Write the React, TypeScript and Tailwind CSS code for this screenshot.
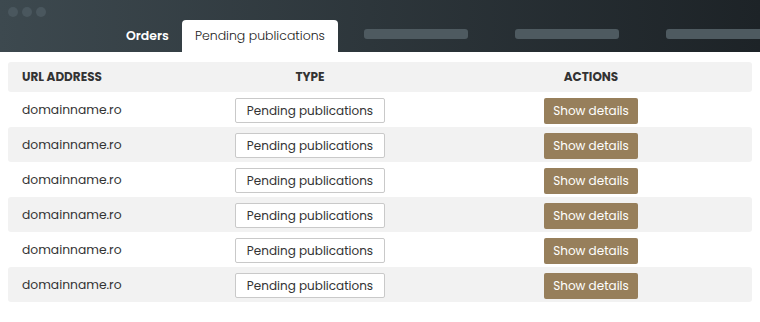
const rows = Array.from({ length: 6 }, (_, i) => i);

const App = () => {
  return (
    <div className="w-[760px] h-[322px] bg-white overflow-hidden font-['Poppins','Open_Sans',sans-serif]">
      {/* Top bar */}
      <div className="relative h-[52px] bg-gradient-to-r from-[#3d494f] to-[#1d2327]">
        <div className="absolute left-[8px] top-[7px] flex gap-[4px]">
          <span className="w-[10px] h-[10px] rounded-full bg-[#4a575e]" />
          <span className="w-[10px] h-[10px] rounded-full bg-[#4a575e]" />
          <span className="w-[10px] h-[10px] rounded-full bg-[#4a575e]" />
        </div>
        <div className="flex items-end h-full pl-[113px]">
          <div className="h-[32px] px-[13px] shrink-0 flex items-center text-[12.5px] font-semibold text-white">
            Orders
          </div>
          <div className="h-[32px] w-[156px] shrink-0 bg-white rounded-t-[4px] flex items-center justify-center text-[12.5px] font-light text-[#222]">
            Pending publications
          </div>
          <div className="flex gap-[47px] ml-[26px] self-start mt-[29px] shrink-0">
            <span className="w-[104px] h-[10px] rounded-[3px] bg-[#4e5a60]" />
            <span className="w-[104px] h-[10px] rounded-[3px] bg-[#4e5a60]" />
            <span className="w-[104px] h-[10px] rounded-[3px] bg-[#4e5a60]" />
          </div>
        </div>
      </div>

      {/* Table */}
      <div className="mx-[8px] mt-[10px]">
        <div className="grid grid-cols-[180px_244px_318px] h-[30px] items-center bg-[#f2f2f2] rounded-[3px] text-[12px] font-bold text-[#333]">
          <div className="pl-[14px]">URL ADDRESS</div>
          <div className="text-center">TYPE</div>
          <div className="text-center">ACTIONS</div>
        </div>
        {rows.map((i) => (
          <div
            key={i}
            className={`grid grid-cols-[180px_244px_318px] h-[35px] pt-[2px] items-center rounded-[3px] text-[12px] text-[#333] ${
              i % 2 === 1 ? "bg-[#f2f2f2]" : "bg-white"
            }`}
          >
            <div className="pl-[14px] text-[12.3px]">domainname.ro</div>
            <div className="flex justify-center">
              <div className="w-[150px] h-[25px] border border-[#c9c9c9] rounded-[2px] bg-white flex items-center justify-center">
                Pending publications
              </div>
            </div>
            <div className="flex justify-center">
              <button className="w-[94px] h-[26px] rounded-[2px] bg-[#977f5b] text-white text-[12px]">
                Show details
              </button>
            </div>
          </div>
        ))}
      </div>
    </div>
  );
};

export default App;
